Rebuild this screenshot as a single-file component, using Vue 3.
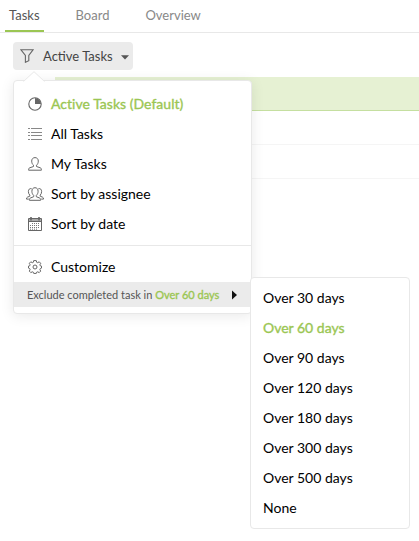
<script setup>
const tabs = ['Tasks', 'Board', 'Overview']
const filters = [
  { icon: 'pie', label: 'Active Tasks (Default)', active: true },
  { icon: 'list', label: 'All Tasks' },
  { icon: 'user', label: 'My Tasks' },
  { icon: 'users', label: 'Sort by assignee' },
  { icon: 'calendar', label: 'Sort by date' },
]
const periods = ['Over 30 days', 'Over 60 days', 'Over 90 days', 'Over 120 days', 'Over 180 days', 'Over 300 days', 'Over 500 days', 'None']
const selected = 'Over 60 days'
</script>

<template>
  <div class="page">
    <nav class="tabs">
      <a v-for="(t, i) in tabs" :key="t" class="tab" :class="{ current: i === 0 }">{{ t }}</a>
    </nav>

    <div class="toolbar">
      <button class="filter">
        <svg class="funnel" width="14" height="14" viewBox="0 0 14 14"><path d="M.8.7h12.400L8.800 6.500v5.200l-3.400 1.600V6.500z" /></svg>
        <span class="filter-label">Active Tasks</span>
        <svg class="caret" width="8" height="5" viewBox="0 0 8 5"><path d="M0 .3h8L4 4.600z" /></svg>
      </button>
    </div>

    <div class="table">
      <div class="band"></div>
      <div class="line"></div>
      <div class="line"></div>
    </div>

    <div class="menu">
      <svg class="pointer" width="22" height="11" viewBox="0 0 22 11"><path class="fill" d="M0 11 11 .7 22 11z" /><path class="edge" d="M.5 10.500 11 .7l10.500 9.800" /></svg>
      <div class="items">
        <div v-for="f in filters" :key="f.label" class="item" :class="{ active: f.active }">
          <span class="icon">
            <svg v-if="f.icon === 'pie'" width="14" height="14" viewBox="0 0 14 14">
              <circle cx="7" cy="7" r="6.200" class="s" /><path d="M7 1v6h6A6 6 0 0 0 7 1z" fill="#666" />
            </svg>
            <svg v-else-if="f.icon === 'list'" width="14" height="14" viewBox="0 0 14 14">
              <path d="M0 1.500h2M3 1.500h11M0 5.500h2M3 5.500h11M0 8.500h2M3 8.500h11M0 12.500h2M3 12.500h11" class="l" />
            </svg>
            <svg v-else-if="f.icon === 'user'" width="14" height="14" viewBox="0 0 14 14">
              <path d="M5.500 8.200C4.300 7.300 3.700 5.800 3.700 4.100 3.700 2 5 .6 7 .6s3.300 1.400 3.300 3.500c0 1.700-.6 3.200-1.800 4.100v1.300l4 1.400c.7.300.9.900.9 2.300H.6c0-1.400.2-2 .9-2.300l4-1.400z" class="t" />
            </svg>
            <svg v-else-if="f.icon === 'users'" width="18" height="14" viewBox="0 0 18 14">
              <path d="M7.700 8.400C6.600 7.500 5.900 6 5.900 4.300 5.900 2.100 7.100.7 9 .7s3.100 1.400 3.100 3.600c0 1.700-.7 3.200-1.800 4.100v1.300l3.300 1.300c.8.300 1 1 1 2.300H3.400c0-1.300.2-2 1-2.300l3.300-1.300zM5.600 1.700C3.600 1.100 2.400 2.500 2.400 4.600c0 1.500.5 2.700 1.400 3.500v1.100L1.400 10.200c-.7.300-.9.800-.9 1.900h2.300M12.400 1.700c2-.6 3.200.8 3.200 2.900 0 1.500-.5 2.700-1.400 3.500v1.100l2.400 1c.7.300.9.800.9 1.900h-2.300" class="t" />
            </svg>
            <svg v-else width="14" height="14" viewBox="0 0 14 14">
              <path d="M.5 1.500h13v12H.5z" class="t" />
              <path d="M1 2h12v2.500H1z" fill="#aaa" />
              <path d="M.5 4.500h13" class="t" />
              <path d="M3 0v3.500M11 0v3.500" stroke="#666" stroke-width="1.600" />
              <path d="M4 6.500h8M2 8.500h10M2 10.500h10M2 12.200h7" class="dots" />
            </svg>
          </span>
          <span class="text">{{ f.label }}</span>
        </div>
      </div>
      <div class="item customize">
        <span class="icon">
          <svg width="14" height="14" viewBox="0 0 14 14">
            <path d="M5.700.6h2.600l.4 1.700 1 .4 1.500-.9 1.500 1.500-.8 1.500.4 1 1.200.3v2l-1.200.5-.4 1 .8 1.500-1.500 1.500-1.500-.8-1 .4-.4 1.200H5.700l-.4-1.200-1-.4-1.500.8-1.500-1.500.8-1.500-.4-1L.5 8.100v-2l1.200-.3.4-1-.8-1.500 1.500-1.500 1.500.9 1-.4z" class="t" />
            <circle cx="7" cy="7" r="2" class="t" />
          </svg>
        </span>
        <span class="text">Customize</span>
      </div>
      <div class="exclude">
        <span>Exclude completed task in <b>{{ selected }}</b></span>
        <svg class="arrow" width="5" height="10" viewBox="0 0 5 10"><path d="M0 .5 5 5 0 9.500z" /></svg>
      </div>
    </div>

    <div class="submenu">
      <div v-for="p in periods" :key="p" class="period" :class="{ active: p === selected }">{{ p }}</div>
    </div>
  </div>
</template>

<style>
body { background: #fff; }
</style>

<style scoped>
.page { position: relative; width: 419px; height: 541px; overflow: hidden; font-family: Lato, sans-serif; font-size: 14px; color: #000; }
.tabs { display: flex; height: 32px; padding-left: 5px; border-bottom: 1px solid #e8e8e8; }
.tab { box-sizing: border-box; height: 32px; padding: 0 4px; margin-right: 28px; line-height: 31px; font-size: 13px; color: #888; border-bottom: 2px solid transparent; }
.tab.current { color: #555; border-bottom-color: #9bc653; }
.toolbar { padding: 9px 0 7px 13px; }
.filter { display: flex; align-items: center; box-sizing: border-box; width: 120px; height: 28px; padding: 0 4px 0 7px; border: 0; border-radius: 4px; background: #ebebeb; font: inherit; font-size: 13px; color: #444; }
.funnel { fill: none; stroke: #666; stroke-width: 1.1; }
.filter-label { margin-left: 9px; white-space: nowrap; }
.caret { margin: 3px 0 0 auto; fill: #555; }
.table { margin-left: 55px; }
.band { height: 33px; background: #e6f1d3; border-bottom: 1px solid #c5dfa0; }
.line { height: 33px; border-bottom: 1px solid #f5f5f5; }
.menu { position: absolute; left: 13px; top: 80px; box-sizing: border-box; width: 239px; height: 234px; padding-top: 8px; background: #fff; border: 1px solid #e8e8e8; border-radius: 4px; box-shadow: 0 2px 14px rgba(0, 0, 0, .09); }
.pointer { position: absolute; left: 9px; top: -10px; }
.pointer .fill { fill: #fff; }
.pointer .edge { fill: none; stroke: #e8e8e8; }
.items { padding-bottom: 6px; border-bottom: 1px solid #e8e8e8; }
.item { display: flex; align-items: center; height: 30px; padding-left: 11px; }
.icon { display: flex; justify-content: center; width: 20px; margin-right: 6px; }
.text { padding-bottom: 2px; }
.active { color: #9bc653; -webkit-text-stroke: .35px #9bc653; }
.active .text { letter-spacing: .03px; }
.customize { margin-top: 6px; }
.s { fill: none; stroke: #666; stroke-width: 1.1; }
.t { fill: none; stroke: #666; stroke-width: 1; }
.l { fill: none; stroke: #888; }
.dots { fill: none; stroke: #777; stroke-dasharray: 1 1; }
.exclude { display: flex; align-items: center; height: 25px; padding: 0 14px 0 13px; background: #ebebeb; font-size: 11px; color: #555; }
.exclude b { color: #9bc653; font-weight: 400; -webkit-text-stroke: .35px #9bc653; }
.arrow { margin-left: auto; fill: #111; }
.submenu { position: absolute; left: 250px; top: 277px; box-sizing: border-box; width: 160px; height: 252px; padding: 5px 12px; background: #fff; border: 1px solid #e8e8e8; border-radius: 4px; }
.period { height: 30px; line-height: 30px; }
</style>
